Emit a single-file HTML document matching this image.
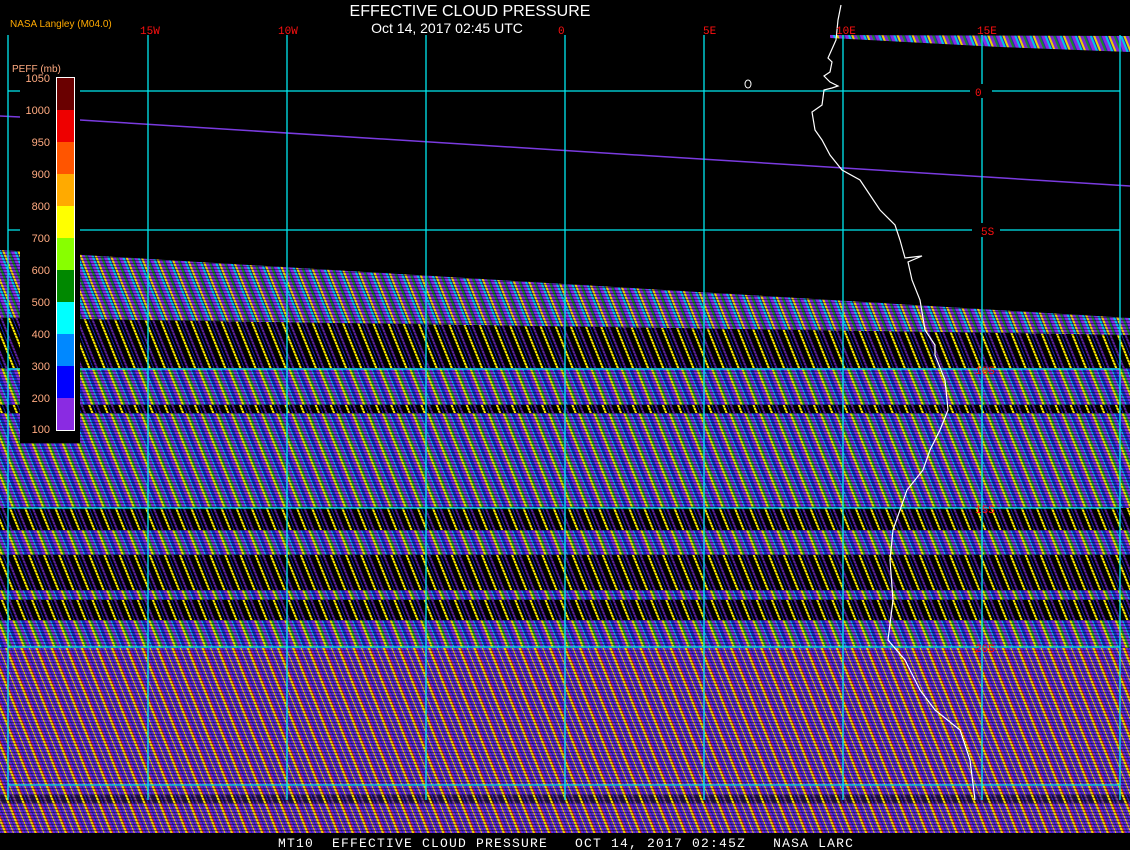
<!DOCTYPE html>
<html><head><style>
html,body{margin:0;padding:0;background:#000;width:1130px;height:850px;overflow:hidden}
svg{display:block}
text{font-family:"Liberation Sans",sans-serif}
.m{font-family:"Liberation Mono",monospace}
</style></head><body>
<svg width="1130" height="850" viewBox="0 0 1130 850">
<defs>
<pattern id="pA" width="14" height="6" patternUnits="userSpaceOnUse" patternTransform="rotate(-22)">
<rect width="14" height="6" fill="#2a20b0"/>
<rect x="0" width="3" height="6" fill="#8a2be2"/>
<rect x="3" width="2" height="6" fill="#00c8e8"/>
<rect x="6" width="2" height="6" fill="#e8d800"/>
<rect x="8" width="3" height="6" fill="#7a28d0"/>
<rect x="11" width="2" height="6" fill="#1a8a2a"/>
</pattern>
<pattern id="pB" width="14" height="6" patternUnits="userSpaceOnUse" patternTransform="rotate(-22)">
<rect width="14" height="6" fill="#000"/>
<rect x="0" width="2" height="6" fill="#ffee00"/>
<rect x="4" width="1" height="6" fill="#1a28c0"/>
<rect x="7" width="2" height="6" fill="#5a20a0"/>
</pattern>
<pattern id="pC" width="14" height="6" patternUnits="userSpaceOnUse" patternTransform="rotate(-22)">
<rect width="14" height="6" fill="#1a28c0"/>
<rect x="0" width="3" height="6" fill="#7a2ad8"/>
<rect x="3" width="2" height="6" fill="#e8d800"/>
<rect x="5" width="2" height="6" fill="#1a9a34"/>
<rect x="7" width="3" height="6" fill="#7a2ad8"/>
<rect x="10" width="1" height="6" fill="#00c8e0"/>
</pattern>
<pattern id="pD" width="14" height="6" patternUnits="userSpaceOnUse" patternTransform="rotate(-22)">
<rect width="14" height="6" fill="#6a28d0"/>
<rect x="0" width="2" height="6" fill="#e8d800"/>
<rect x="2" width="1" height="6" fill="#e02010"/>
<rect x="5" width="1" height="6" fill="#1a28c0"/>
<rect x="8" width="1" height="6" fill="#e8d800"/>
<rect x="11" width="1" height="6" fill="#2030b0"/>
</pattern>
<pattern id="scan" width="4" height="3" patternUnits="userSpaceOnUse">
<rect y="2" width="4" height="1" fill="#000"/>
</pattern>
</defs>
<rect width="1130" height="850" fill="#000"/>
<polygon points="830,35 1130,36 1130,52 1000,47 830,38" fill="url(#pA)"/>
<polygon points="0,250 1130,318 1130,335 0,318" fill="url(#pA)"/>
<polygon points="0,318 1130,335 1130,368 0,368" fill="url(#pB)"/>
<rect x="0" y="368" width="1130" height="140" fill="url(#pC)"/>
<rect x="0" y="405" width="1130" height="8" fill="url(#pB)"/>
<rect x="0" y="508" width="1130" height="22" fill="url(#pB)"/>
<rect x="0" y="530" width="1130" height="25" fill="url(#pC)"/>
<rect x="0" y="555" width="1130" height="65" fill="url(#pB)"/>
<rect x="0" y="590" width="1130" height="10" fill="url(#pC)"/>
<rect x="0" y="620" width="1130" height="28" fill="url(#pC)"/>
<rect x="0" y="648" width="1130" height="185" fill="url(#pD)"/>
<rect x="0" y="795" width="1130" height="8" fill="url(#pB)" opacity="0.6"/>
<polygon points="0,250 1130,318 1130,833 0,833" fill="url(#scan)" opacity="0.45"/>
<polyline points="0,116 20,117" stroke="#7a3be0" stroke-width="1.5" fill="none"/>
<line x1="80" y1="120" x2="1130" y2="186" stroke="#7a3be0" stroke-width="1.5"/>
<g stroke="#00e8f0" stroke-width="1.3">
<line x1="8" y1="35" x2="8" y2="800"/><line x1="148" y1="35" x2="148" y2="800"/>
<line x1="287" y1="35" x2="287" y2="800"/><line x1="426" y1="35" x2="426" y2="800"/>
<line x1="565" y1="35" x2="565" y2="800"/><line x1="704" y1="35" x2="704" y2="800"/>
<line x1="843" y1="35" x2="843" y2="800"/><line x1="982" y1="35" x2="982" y2="800"/>
<line x1="1120" y1="35" x2="1120" y2="800"/>
<line x1="8" y1="91" x2="1120" y2="91"/><line x1="8" y1="230" x2="1120" y2="230"/>
<line x1="8" y1="369" x2="1120" y2="369"/><line x1="8" y1="508" x2="1120" y2="508"/>
<line x1="8" y1="647" x2="1120" y2="647"/><line x1="8" y1="785" x2="1120" y2="785"/>
</g>
<polyline points="841,5 838,20 836,40 828,58 832,62 830,72 824,76 830,82 838,86 832,88 824,90 822,105 812,112 815,130 822,140 830,155 842,170 860,180 870,195 880,210 895,225 900,240 905,258 922,256 908,262 912,280 920,300 925,330 935,345 935,355 945,380 948,410 940,430 930,450 923,470 907,490 900,510 893,530 890,560 893,600 888,640 905,660 920,690 935,710 960,730 970,760 975,800" stroke="#fff" stroke-width="1.2" fill="none"/>
<ellipse cx="748" cy="84" rx="3" ry="4" stroke="#fff" fill="none"/>
<g fill="#ff1010" font-size="11">
<text x="140" y="34" class="m">15W</text><text x="278" y="34" class="m">10W</text>
<text x="558" y="34" class="m">0</text><text x="703" y="34" class="m">5E</text>
<text x="836" y="34" class="m">10E</text><text x="977" y="34" class="m">15E</text>
<rect x="970" y="84" width="22" height="14" fill="#000"/>
<text x="975" y="96" class="m">0</text>
<rect x="972" y="223" width="28" height="14" fill="#000"/>
<text x="981" y="235" class="m">5S</text>
<text x="975" y="374" class="m">10S</text><text x="975" y="513" class="m">15S</text>
<text x="975" y="652" class="m">20S</text>
</g>
<text x="470" y="16" fill="#fff" font-size="16" text-anchor="middle">EFFECTIVE CLOUD PRESSURE</text>
<text x="447" y="33" fill="#fff" font-size="14" text-anchor="middle">Oct 14, 2017 02:45 UTC</text>
<text x="10" y="27" fill="#ffaa00" font-size="10">NASA Langley (M04.0)</text>
<rect x="20" y="73" width="60" height="370" fill="#000"/>
<text x="12" y="72" fill="#ffaa80" font-size="10">PEFF (mb)</text>
<g>
<rect x="57" y="78" width="17" height="32" fill="#6a0000"/>
<rect x="57" y="110" width="17" height="32" fill="#ee0000"/>
<rect x="57" y="142" width="17" height="32" fill="#ff5500"/>
<rect x="57" y="174" width="17" height="32" fill="#ffaa00"/>
<rect x="57" y="206" width="17" height="32" fill="#ffff00"/>
<rect x="57" y="238" width="17" height="32" fill="#88ff00"/>
<rect x="57" y="270" width="17" height="32" fill="#008800"/>
<rect x="57" y="302" width="17" height="32" fill="#00ffff"/>
<rect x="57" y="334" width="17" height="32" fill="#0088ff"/>
<rect x="57" y="366" width="17" height="32" fill="#0000ff"/>
<rect x="57" y="398" width="17" height="32" fill="#8a2be2"/>
<rect x="56.5" y="77.5" width="18" height="353" fill="none" stroke="#fff"/>
</g>
<g fill="#ffaa80" font-size="11" text-anchor="end">
<text x="50" y="82">1050</text><text x="50" y="114">1000</text><text x="50" y="146">950</text>
<text x="50" y="178">900</text><text x="50" y="210">800</text><text x="50" y="242">700</text>
<text x="50" y="274">600</text><text x="50" y="306">500</text><text x="50" y="338">400</text>
<text x="50" y="370">300</text><text x="50" y="402">200</text><text x="50" y="433">100</text>
</g>
<rect x="0" y="833" width="1130" height="17" fill="#000"/>
<text x="278" y="847" fill="#fff" font-size="13" class="m" letter-spacing="1.2" xml:space="preserve">MT10  EFFECTIVE CLOUD PRESSURE   OCT 14, 2017 02:45Z   NASA LARC</text>
</svg>
</body></html>
